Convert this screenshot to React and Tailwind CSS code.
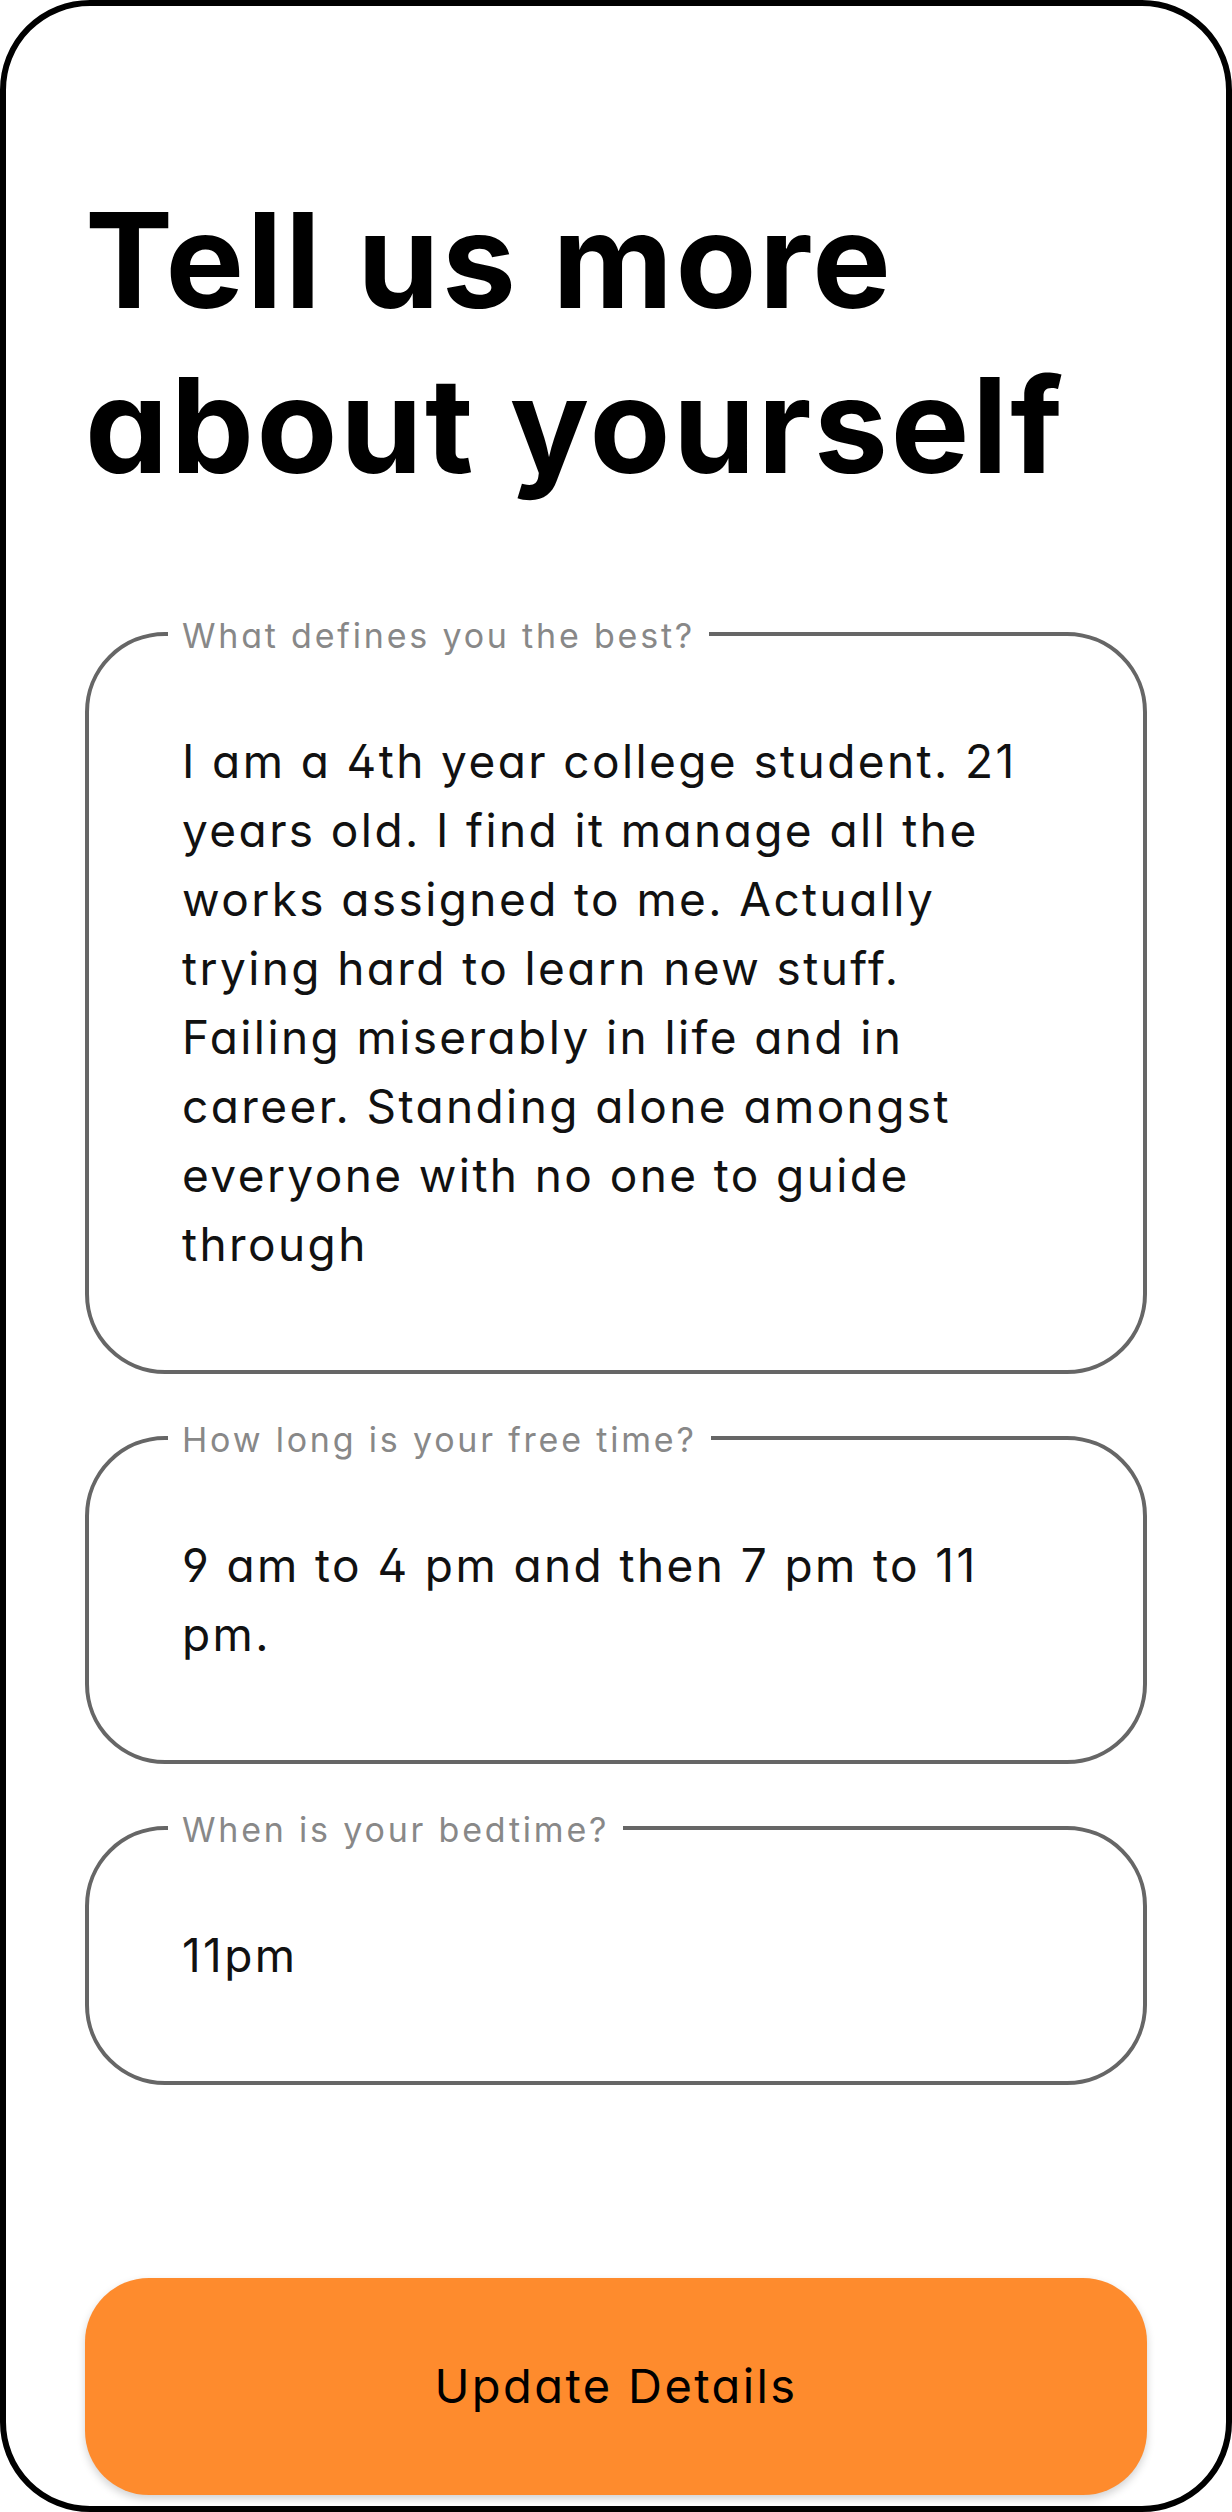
import React from "react";

const FIELDS = [
  {
    label: "What defines you the best?",
    value:
      "I am a 4th year college student. 21 years old. I find it manage all the works assigned to me. Actually trying hard to learn new stuff. Failing miserably in life and in career. Standing alone amongst everyone with no one to guide through",
  },
  { label: "How long is your free time?", value: "9 am to 4 pm and then 7 pm to 11 pm." },
  { label: "When is your bedtime?", value: "11pm" },
];

const font = "font-['Inter',sans-serif] [font-feature-settings:'cv11','ss01']";

const Field = ({ label, value }) => (
  <div className="relative border-4 border-[#666666] rounded-[80px] px-[93px] py-[91px]">
    {/* label sits on the top border */}
    <span className="absolute top-0 left-[79px] -translate-y-1/2 bg-white px-[14px] text-[34px] leading-[40px] text-[#888888] tracking-[2.8px]">
      {label}
    </span>
    <p className="text-[46px] leading-[69px] text-[#111] tracking-[2.4px]">{value}</p>
  </div>
);

export default function App() {
  return (
    <div className={`${font} w-[1232px] h-[2512px] bg-white border-[6px] border-black rounded-[90px] px-[79px] pt-[172px] flex flex-col`}>
      <h1 className="text-[132px] leading-[165px] font-bold text-black tracking-[2.6px]">
        Tell us more about yourself
      </h1>

      <div className="mt-[124px] flex flex-col gap-[62px]">
        {FIELDS.map((f) => (
          <Field key={f.label} label={f.label} value={f.value} />
        ))}
      </div>

      <button className="mt-[193px] h-[217px] w-full rounded-[64px] bg-[#fe8b2d] shadow-[0_4px_8px_rgba(0,0,0,0.18)] text-[47px] text-black tracking-[2.4px]">
        Update Details
      </button>
    </div>
  );
}
